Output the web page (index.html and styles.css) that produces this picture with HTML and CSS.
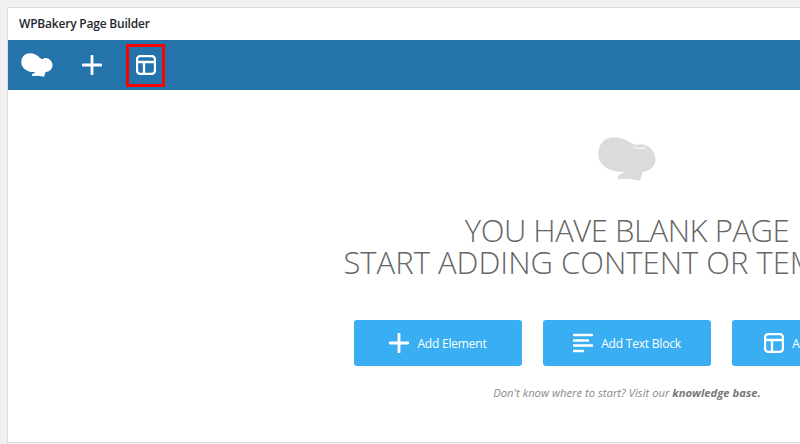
FILE: index.html
```html
<!DOCTYPE html>
<html>
<head>
  <meta charset='utf-8' />
  <title>WPBakery Page Builder</title>
  <link rel="stylesheet" href="styles.css">
</head>
<body>
  <div class="panel">
    <div class="title">WPBakery Page Builder</div>
    <div class="toolbar">
      <svg class="logo" viewBox="24 24 174 133"><path d="M70 25C95 25 112 35 128 52C135 60 145 60 152 52C175 48 197 68 197 92C197 112 180 128 158 130L150 156L118 150L84 152L82 143L105 128C70 135 24 115 24 75C24 45 45 25 70 25Z"/></svg>
      <svg class="plus" viewBox="0 0 20 20"><path d="M10 1V19M1 10H19"/></svg>
      <div class="picked">
        <svg class="layout" viewBox="0 0 20 20"><rect x="1" y="1" width="18" height="18" rx="3.500"/><path d="M1 7H19M8 7V19"/></svg>
      </div>
    </div>
    <div class="blank">
      <svg class="chef" viewBox="24 24 174 133"><path d="M70 25C95 25 112 35 128 44C135 50 140 49 150 46C175 44 197 68 197 92C197 112 180 128 158 130L150 156L118 150L84 152L82 143L105 128C70 135 24 115 24 75C24 45 45 25 70 25Z"/><path class="notch" d="M128 52C138 60 150 60 166 56"/></svg>
      <h2><span class="line-one">YOU HAVE BLANK PAGE</span><span class="line-two">START ADDING CONTENT OR TEMPLATES</span></h2>
      <div class="actions">
        <a class="btn"><svg class="plus" viewBox="0 0 20 20"><path d="M10 1V19M1 10H19"/></svg>Add Element</a>
        <a class="btn"><svg class="lines" viewBox="0 0 20 20"><path d="M1 2H19M1 7.500H15M1 12.500H19M1 18H10"/></svg>Add Text Block</a>
        <a class="btn"><svg class="layout" viewBox="0 0 20 20"><rect x="1" y="1" width="18" height="18" rx="3.500"/><path d="M1 7H19M8 7V19"/></svg>Add Template</a>
      </div>
      <p class="hint">Don't know where to start? Visit our <b>knowledge base.</b></p>
    </div>
  </div>
</body>
</html>
```

FILE: styles.css
```css
html, body {
  height: 100%;
  overflow: hidden;
}
body {
  margin: 0;
  padding: 7px 0 0 7px;
  box-sizing: border-box;
  background-color: #f1f1f1;
  font-family: "Open Sans", "Liberation Sans", sans-serif;
}
.panel {
  width: 1240px;
  height: 436px;
  box-sizing: border-box;
  background-color: #fff;
  border: 1px solid #dcdcdc;
}
.title {
  height: 32px;
  line-height: 31px;
  padding-left: 11px;
  font-size: 12px;
  letter-spacing: -.2px;
  font-weight: 600;
  color: #23282d;
}
.toolbar {
  height: 50px;
  display: flex;
  align-items: center;
  background-color: #2573ab;
}
.toolbar .logo {
  width: 32px;
  height: 24px;
  margin-left: 13px;
  fill: #fff;
}
.toolbar .plus {
  margin-left: 29px;
}
.picked {
  width: 39px;
  height: 43px;
  box-sizing: border-box;
  margin-left: 24px;
  display: flex;
  align-items: center;
  justify-content: center;
  border: 3px solid #f00;
}
.plus, .lines, .layout {
  width: 20px;
  height: 20px;
  flex: none;
  fill: none;
  stroke: #fff;
  stroke-width: 2.300;
  stroke-linecap: round;
}
.plus {
  stroke-width: 2.800;
}
.lines {
  stroke-width: 2.600;
}
.blank {
  display: flex;
  flex-direction: column;
  align-items: center;
  padding-top: 47px;
}
.chef {
  width: 58px;
  height: 44px;
  fill: #dbdbdb;
}
.notch {
  fill: none;
  stroke: #fff;
  stroke-width: 3;
}
h2 {
  margin: 33px 0 0;
  font-size: 31px;
  line-height: 32px;
  font-weight: 300;
  color: #666;
  text-align: center;
  white-space: nowrap;
}
.line-one, .line-two {
  display: block;
}
.line-one {
  letter-spacing: -.45px;
}
.line-two {
  margin-left: 9px;
}
.actions {
  display: flex;
  gap: 21px;
  margin-top: 42px;
}
.btn {
  width: 168px;
  height: 46px;
  display: flex;
  align-items: center;
  justify-content: center;
  gap: 8px;
  background-color: #3aaef2;
  border-radius: 3px;
  color: #fff;
  font-size: 12px;
  letter-spacing: -.2px;
  white-space: nowrap;
}
.hint {
  margin: 19px 0 0;
  font-size: 11.250px;
  font-style: italic;
  color: #8a8a8a;
}
.hint b {
  color: #777;
}
```
